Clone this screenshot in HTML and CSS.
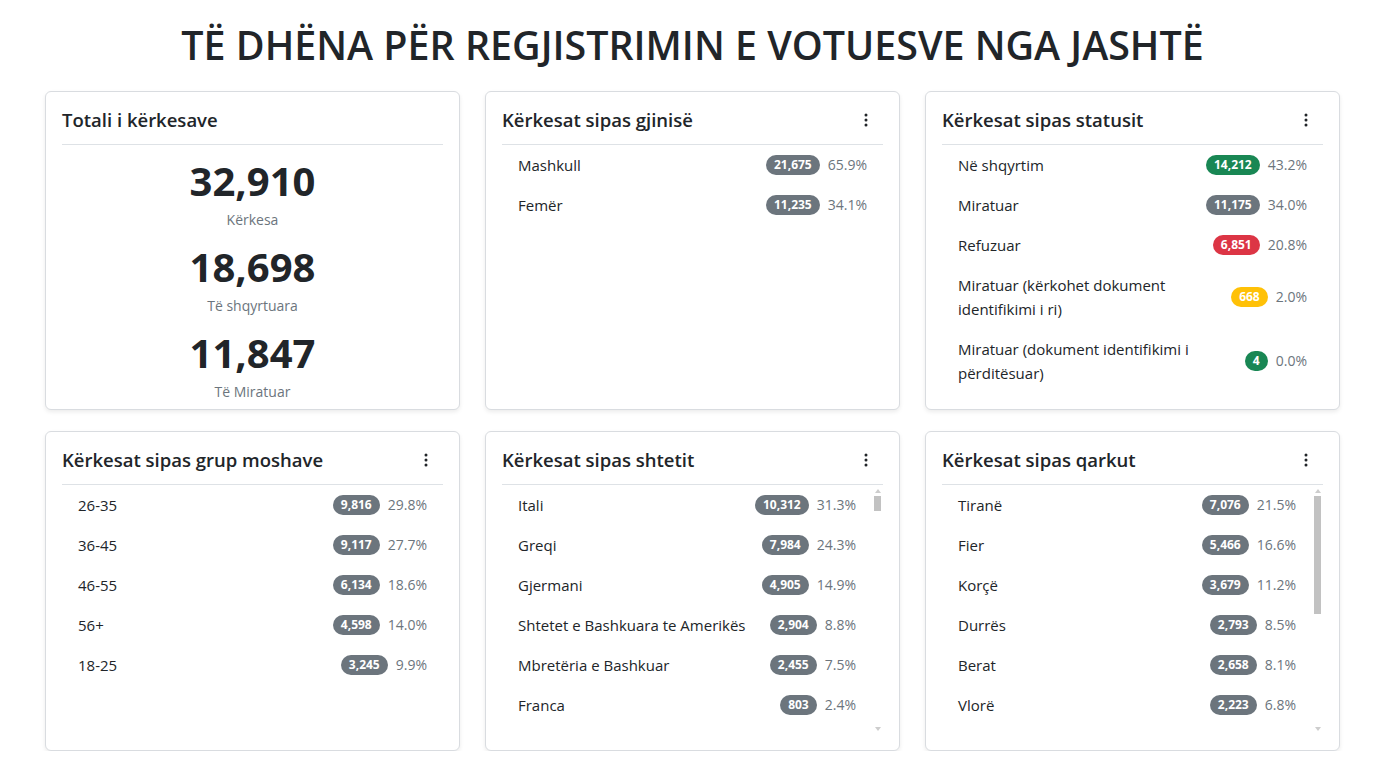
FILE: index.html
```html
<!DOCTYPE html>
<html lang="sq">
<head>
    <meta charset="UTF-8">
    <meta name="viewport" content="width=device-width, initial-scale=1.0">
    <title>Të dhëna për regjistrimin e votuesve nga jashtë</title>
    <link rel="stylesheet" href="styles.css">
</head>
<body>
    <div class="page">
        <h1 class="page-title">TË DHËNA PËR REGJISTRIMIN E VOTUESVE NGA JASHTË</h1>

        <div class="cards">
            <div class="card card-totals">
                <div class="card-head">
                    <h5 class="card-title">Totali i kërkesave</h5>
                </div>
                <div class="totals">
                    <div class="total">
                        <div class="total-value">32,910</div>
                        <div class="total-label">Kërkesa</div>
                    </div>
                    <div class="total">
                        <div class="total-value">18,698</div>
                        <div class="total-label">Të shqyrtuara</div>
                    </div>
                    <div class="total">
                        <div class="total-value">11,847</div>
                        <div class="total-label">Të Miratuar</div>
                    </div>
                </div>
            </div>

            <div class="card">
                <div class="card-head">
                    <h5 class="card-title">Kërkesat sipas gjinisë</h5>
                    <button class="menu-btn" type="button">
                        <svg width="16" height="16" viewBox="0 0 16 16" fill="currentColor"><path d="M9.5 13a1.5 1.5 0 1 1-3 0 1.5 1.5 0 0 1 3 0m0-5a1.5 1.5 0 1 1-3 0 1.5 1.5 0 0 1 3 0m0-5a1.5 1.5 0 1 1-3 0 1.5 1.5 0 0 1 3 0"/></svg>
                    </button>
                </div>
                <ul class="rows" id="gender"></ul>
            </div>

            <div class="card">
                <div class="card-head">
                    <h5 class="card-title">Kërkesat sipas statusit</h5>
                    <button class="menu-btn" type="button">
                        <svg width="16" height="16" viewBox="0 0 16 16" fill="currentColor"><path d="M9.5 13a1.5 1.5 0 1 1-3 0 1.5 1.5 0 0 1 3 0m0-5a1.5 1.5 0 1 1-3 0 1.5 1.5 0 0 1 3 0m0-5a1.5 1.5 0 1 1-3 0 1.5 1.5 0 0 1 3 0"/></svg>
                    </button>
                </div>
                <ul class="rows" id="status"></ul>
            </div>

            <div class="card">
                <div class="card-head">
                    <h5 class="card-title">Kërkesat sipas grup moshave</h5>
                    <button class="menu-btn" type="button">
                        <svg width="16" height="16" viewBox="0 0 16 16" fill="currentColor"><path d="M9.5 13a1.5 1.5 0 1 1-3 0 1.5 1.5 0 0 1 3 0m0-5a1.5 1.5 0 1 1-3 0 1.5 1.5 0 0 1 3 0m0-5a1.5 1.5 0 1 1-3 0 1.5 1.5 0 0 1 3 0"/></svg>
                    </button>
                </div>
                <ul class="rows" id="age"></ul>
            </div>

            <div class="card">
                <div class="card-head">
                    <h5 class="card-title">Kërkesat sipas shtetit</h5>
                    <button class="menu-btn" type="button">
                        <svg width="16" height="16" viewBox="0 0 16 16" fill="currentColor"><path d="M9.5 13a1.5 1.5 0 1 1-3 0 1.5 1.5 0 0 1 3 0m0-5a1.5 1.5 0 1 1-3 0 1.5 1.5 0 0 1 3 0m0-5a1.5 1.5 0 1 1-3 0 1.5 1.5 0 0 1 3 0"/></svg>
                    </button>
                </div>
                <div class="scroll-box">
                    <ul class="rows rows-scroll" id="country"></ul>
                    <div class="scrollbar">
                        <span class="sb-arrow sb-up"></span>
                        <div class="sb-track"><div class="sb-thumb"></div></div>
                        <span class="sb-arrow sb-down"></span>
                    </div>
                </div>
            </div>

            <div class="card">
                <div class="card-head">
                    <h5 class="card-title">Kërkesat sipas qarkut</h5>
                    <button class="menu-btn" type="button">
                        <svg width="16" height="16" viewBox="0 0 16 16" fill="currentColor"><path d="M9.5 13a1.5 1.5 0 1 1-3 0 1.5 1.5 0 0 1 3 0m0-5a1.5 1.5 0 1 1-3 0 1.5 1.5 0 0 1 3 0m0-5a1.5 1.5 0 1 1-3 0 1.5 1.5 0 0 1 3 0"/></svg>
                    </button>
                </div>
                <div class="scroll-box">
                    <ul class="rows rows-scroll" id="county"></ul>
                    <div class="scrollbar">
                        <span class="sb-arrow sb-up"></span>
                        <div class="sb-track"><div class="sb-thumb"></div></div>
                        <span class="sb-arrow sb-down"></span>
                    </div>
                </div>
            </div>
        </div>
    </div>

    <script>
        const TOTAL = 32910;

        // [label, count, badge colour]
        const data = {
            gender: [
                ["Mashkull", 21675],
                ["Femër", 11235]
            ],
            status: [
                ["Në shqyrtim", 14212, "green"],
                ["Miratuar", 11175],
                ["Refuzuar", 6851, "red"],
                ["Miratuar (kërkohet dokument identifikimi i ri)", 668, "yellow"],
                ["Miratuar (dokument identifikimi i përditësuar)", 4, "green"]
            ],
            age: [
                ["26-35", 9816],
                ["36-45", 9117],
                ["46-55", 6134],
                ["56+", 4598],
                ["18-25", 3245]
            ],
            country: [
                ["Itali", 10312], ["Greqi", 7984], ["Gjermani", 4905],
                ["Shtetet e Bashkuara te Amerikës", 2904], ["Mbretëria e Bashkuar", 2455],
                ["Franca", 803], ["Zvicër", 612], ["Belgjikë", 398], ["Kanada", 341],
                ["Suedi", 244], ["Austri", 198], ["Holandë", 176], ["Maqedoni e Veriut", 152],
                ["Turqi", 131], ["Irlandë", 118], ["Australi", 97], ["Norvegji", 86],
                ["Danimarkë", 74], ["Kosovë", 71], ["Spanjë", 68], ["Mal i Zi", 55],
                ["Finlandë", 42], ["Poloni", 38], ["Çeki", 33], ["Portugali", 31],
                ["Emiratet e Bashkuara Arabe", 29], ["Kroaci", 26], ["Slloveni", 24],
                ["Hungari", 22], ["Rumani", 21], ["Bullgari", 19], ["Luksemburg", 18],
                ["Serbi", 17], ["Japoni", 15], ["Kinë", 14], ["Rusi", 13], ["Katar", 12],
                ["Brazil", 11], ["Argjentinë", 10], ["Izrael", 9], ["Qipro", 9], ["Maltë", 8],
                ["Estoni", 7], ["Letoni", 7], ["Lituani", 6], ["Sllovaki", 6], ["Islandë", 5],
                ["Meksikë", 5], ["Afrikë e Jugut", 5], ["Indi", 4], ["Egjipt", 4],
                ["Arabi Saudite", 4], ["Zelandë e Re", 4], ["Kore e Jugut", 3], ["Singapor", 3],
                ["Tajlandë", 3], ["Ukrainë", 3], ["Gjeorgji", 2], ["Kili", 2], ["Kolumbi", 2],
                ["Marok", 2], ["Tunizi", 2], ["Kuvajt", 2], ["Bahrein", 2], ["Jordani", 1],
                ["Liban", 1], ["Armeni", 1], ["Azerbajxhan", 1], ["Kazakistan", 1], ["Peru", 1],
                ["Venezuelë", 1], ["Kubë", 1], ["Vietnam", 1], ["Malajzi", 1], ["Indonezi", 1],
                ["Filipine", 1], ["Pakistan", 1], ["Nigeri", 1], ["Kenia", 1], ["Gana", 1],
                ["Etiopi", 1], ["Bosnjë dhe Hercegovinë", 1], ["Moldavi", 1], ["Bjellorusi", 1],
                ["Monako", 1], ["Andorrë", 1], ["San Marino", 1], ["Lihtenshtajn", 1],
                ["Uzbekistan", 1], ["Oman", 1], ["Algjeri", 1], ["Ekuador", 1], ["Bolivi", 1],
                ["Uruguaj", 1]
            ],
            county: [
                ["Tiranë", 7076], ["Fier", 5466], ["Korçë", 3679], ["Durrës", 2793],
                ["Berat", 2658], ["Vlorë", 2223], ["Elbasan", 2012], ["Shkodër", 1845],
                ["Lezhë", 1402], ["Dibër", 1378], ["Gjirokastër", 1301], ["Kukës", 1077]
            ]
        };

        function renderRows(id, rows) {
            const list = document.getElementById(id);
            list.innerHTML = rows.map(([label, count, colour]) => {
                const pct = (count / TOTAL * 100).toFixed(1);
                return `<li class="row">
                    <span class="row-label">${label}</span>
                    <span class="badge badge-${colour || 'gray'}">${count.toLocaleString('en-US')}</span>
                    <span class="row-pct">${pct}%</span>
                </li>`;
            }).join('');
        }

        // Keep the slim scrollbar in sync with its list
        function updateScrollbar(box) {
            const list = box.querySelector('.rows-scroll');
            const track = box.querySelector('.sb-track');
            const thumb = box.querySelector('.sb-thumb');
            const trackHeight = track.clientHeight;
            const size = Math.max(15, Math.round(trackHeight * list.clientHeight / list.scrollHeight));
            const maxScroll = list.scrollHeight - list.clientHeight;
            const offset = maxScroll > 0 ? (trackHeight - size) * list.scrollTop / maxScroll : 0;
            thumb.style.height = size + 'px';
            thumb.style.marginTop = offset + 'px';
        }

        Object.keys(data).forEach(id => renderRows(id, data[id]));

        document.querySelectorAll('.scroll-box').forEach(box => {
            updateScrollbar(box);
            box.querySelector('.rows-scroll').addEventListener('scroll', () => updateScrollbar(box));
        });
    </script>
</body>
</html>
```

FILE: styles.css
```css
body {
    margin: 0;
    font-family: 'Open Sans', 'Noto Sans', sans-serif;
    color: #212529;
    background-color: #fff;
}
.page {
    width: 1295px;
    padding: 21px 0 0 45px;
}
.page-title {
    margin: 0 0 22px;
    font-size: 39.4px;
    line-height: 48px;
    font-weight: 600;
    text-align: center;
}
.cards {
    display: grid;
    grid-template-columns: repeat(3, 415px);
    column-gap: 25px;
    row-gap: 21px;
}
.card {
    border: 1px solid #d9dce0;
    border-radius: 6px;
    padding: 16px;
    box-shadow: 0 2px 4px rgba(0,0,0,0.08);
    background-color: #fff;
}
.card-totals {
    padding-bottom: 7px;
}
.card-head {
    display: flex;
    align-items: center;
    justify-content: space-between;
    height: 24px;
    padding-bottom: 12px;
    border-bottom: 1px solid #dee2e6;
}
.card-title {
    margin: 0;
    font-size: 18.5px;
    line-height: 24px;
    font-weight: 600;
}
.menu-btn {
    border: 0;
    background: none;
    padding: 0 9px;
    color: #212529;
    display: flex;
}

/* totals card */
.totals {
    padding-top: 12px;
    text-align: center;
}
.total {
    margin-bottom: 13px;
}
.total:last-child {
    margin-bottom: 0;
}
.total-value {
    font-size: 40px;
    line-height: 48px;
    font-weight: 700;
}
.total-label {
    margin-top: 5px;
    font-size: 14px;
    line-height: 20px;
    color: #6c757d;
}

/* lists */
.rows {
    list-style: none;
    margin: 0;
    padding: 0;
}
.row {
    display: flex;
    align-items: center;
    padding: 8px 16px;
    font-size: 15px;
    line-height: 24px;
}
.row-label {
    flex: 1;
    margin-right: 16px;
}
.row-pct {
    margin-left: 8px;
    font-size: 14px;
    color: #6c757d;
}
.badge {
    display: inline-block;
    padding: 4px 8px;
    border-radius: 10px;
    font-size: 12px;
    line-height: 12px;
    font-weight: 700;
    color: #fff;
    white-space: nowrap;
}
.badge-gray {
    background-color: #6c757d;
}
.badge-green {
    background-color: #198754;
}
.badge-red {
    background-color: #dc3545;
}
.badge-yellow {
    background-color: #ffc107;
}

/* scrolling lists with a slim scrollbar */
.scroll-box {
    display: flex;
    height: 249px;
}
.rows-scroll {
    flex: 1;
    overflow-y: auto;
    scrollbar-width: none;
}
.rows-scroll::-webkit-scrollbar {
    display: none;
}
.scrollbar {
    width: 11px;
    display: flex;
    flex-direction: column;
    align-items: center;
}
.sb-arrow {
    width: 0;
    height: 0;
    margin: 4px 0 3px;
    border-left: 3px solid transparent;
    border-right: 3px solid transparent;
}
.sb-up {
    border-bottom: 4px solid #cdcdcd;
}
.sb-down {
    border-top: 4px solid #cdcdcd;
}
.sb-track {
    flex: 1;
    width: 7px;
}
.sb-thumb {
    width: 7px;
    background-color: #c2c2c2;
}
```
